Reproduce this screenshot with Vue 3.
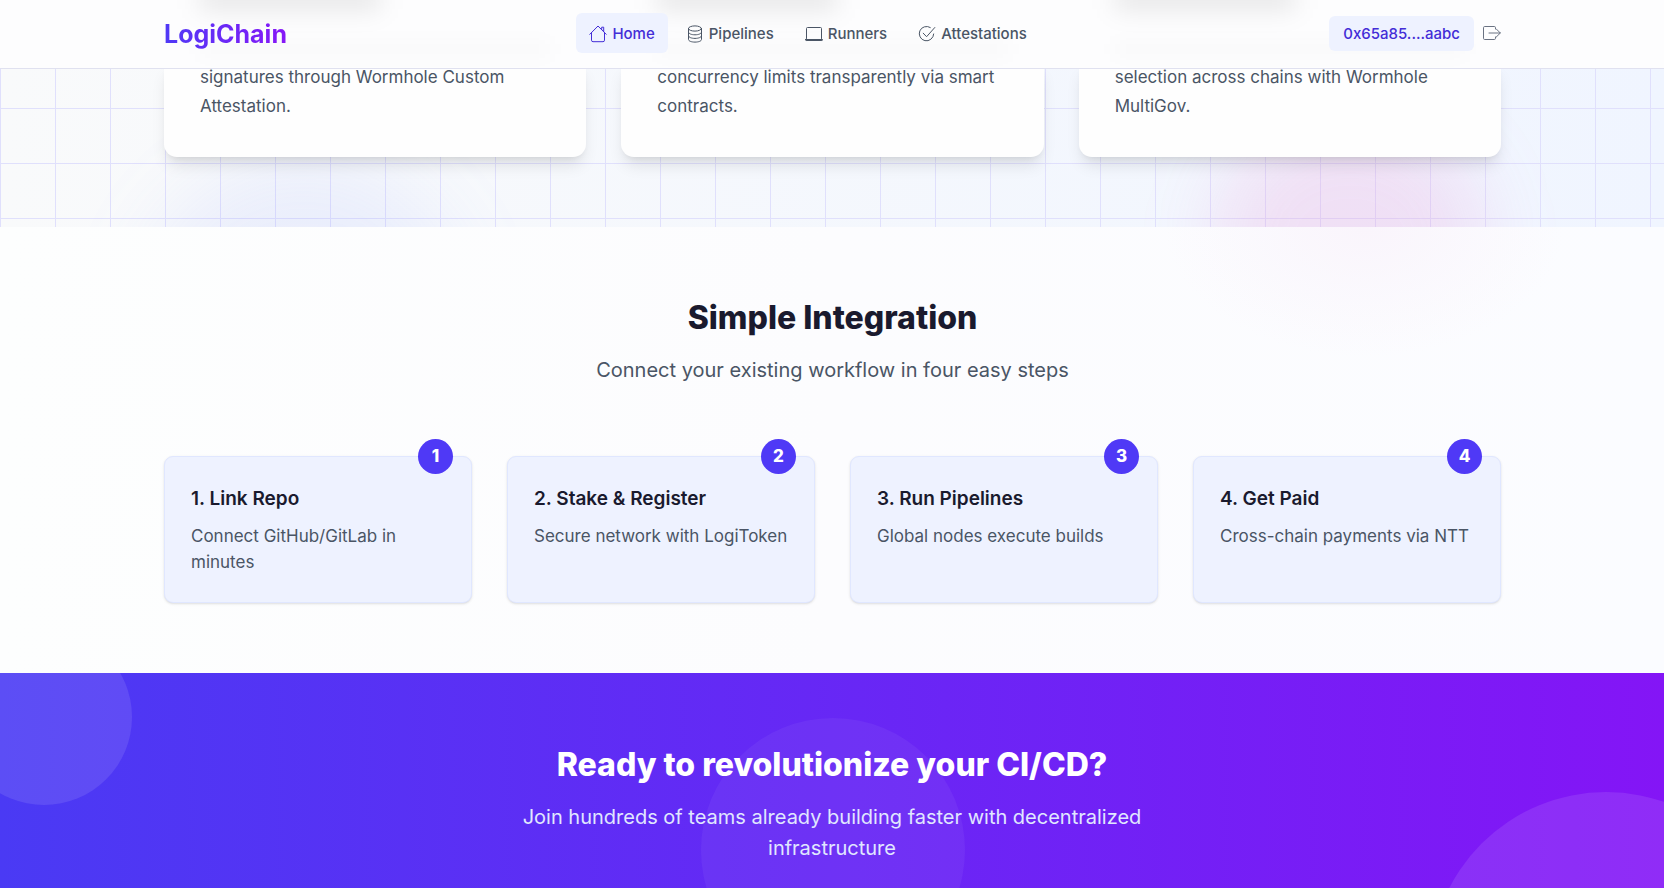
<script setup>
const nav = [
  { label: 'Home', icon: 'home', active: true },
  { label: 'Pipelines', icon: 'database' },
  { label: 'Runners', icon: 'laptop' },
  { label: 'Attestations', icon: 'check' },
]
const features = [
  'signatures through Wormhole Custom Attestation.',
  'concurrency limits transparently via smart contracts.',
  'selection across chains with Wormhole MultiGov.',
]
const steps = [
  { title: 'Link Repo', text: 'Connect GitHub/GitLab in minutes' },
  { title: 'Stake & Register', text: 'Secure network with LogiToken' },
  { title: 'Run Pipelines', text: 'Global nodes execute builds' },
  { title: 'Get Paid', text: 'Cross-chain payments via NTT' },
]
</script>

<template>
  <div class="page">
    <header class="header">
      <div class="ghosts container" aria-hidden="true">
        <div v-for="f in features" :key="f" class="ghost">
          <span class="ghost-title"></span>
          <span class="ghost-line"></span>
        </div>
      </div>
      <div class="bar container">
        <a href="#" class="logo">LogiChain</a>
        <nav class="nav" aria-label="Main">
          <a v-for="n in nav" :key="n.label" href="#" class="nav-item" :class="{ active: n.active }">
            <svg class="icon" viewBox="0 0 18 18" aria-hidden="true">
              <g v-if="n.icon === 'home'">
                <path d="M.8 9.300 9 1l8.200 8.300M2.500 7.700v7.500q0 1.500 1.500 1.500h10q1.500 0 1.500-1.500V7.700M12.700 4.600V2.200h2v4.400" />
              </g>
              <g v-else-if="n.icon === 'database'">
                <ellipse cx="9" cy="3.500" rx="6.500" ry="2.600" />
                <path d="M2.500 3.500v11c0 1.500 2.900 2.600 6.500 2.600s6.500-1.100 6.500-2.600v-11M2.500 7.200c0 1.500 2.900 2.600 6.500 2.600s6.500-1.100 6.500-2.600M2.500 10.800c0 1.500 2.900 2.600 6.500 2.600s6.500-1.100 6.500-2.600" />
              </g>
              <g v-else-if="n.icon === 'laptop'">
                <path d="M1.500 13.500V3.500q0-1 1-1h13q1 0 1 1v10" />
                <path d="M.5 14.500h17v.3q0 .7-.7.7H1.200q-.7 0-.7-.7z" fill="currentColor" />
              </g>
              <g v-else>
                <path d="M12.300 2.500A7.200 7.200 0 1 0 15.700 9M5.200 8.200l3.400 3.500L16.800 2.500" />
              </g>
            </svg>
            <span>{{ n.label }}</span>
          </a>
        </nav>
        <div class="account">
          <button type="button" class="address">0x65a85....aabc</button>
          <button type="button" class="logout" aria-label="Disconnect">
            <svg class="icon" viewBox="0 0 18 18" aria-hidden="true">
              <path d="M12.500 5V3.700Q12.500 2.500 11.300 2.500H1.700Q.5 2.500.5 3.700v10.600q0 1.200 1.200 1.200h9.600q1.200 0 1.200-1.200V13M6 9h11.300M13.300 5l4 4-4 4" />
            </svg>
          </button>
        </div>
      </div>
    </header>

    <main>
      <section class="features">
        <div class="backdrop">
          <div class="blob blob-blue"></div>
          <div class="blob blob-pink"></div>
        </div>
        <div class="feature-grid container">
          <article v-for="f in features" :key="f" class="feature">
            <p>{{ f }}</p>
          </article>
        </div>
      </section>

      <section class="steps">
        <div class="container">
          <h2>Simple Integration</h2>
          <p class="lead">Connect your existing workflow in four easy steps</p>
          <div class="step-grid">
            <article v-for="(s, i) in steps" :key="s.title" class="step">
              <span class="badge">{{ i + 1 }}</span>
              <h3>{{ i + 1 }}. {{ s.title }}</h3>
              <p>{{ s.text }}</p>
            </article>
          </div>
        </div>
      </section>

      <section class="cta">
        <div class="circle circle-a"></div>
        <div class="circle circle-b"></div>
        <div class="circle circle-c"></div>
        <div class="cta-text">
          <h2>Ready to revolutionize your CI/CD?</h2>
          <p class="lead">Join hundreds of teams already building faster with decentralized infrastructure</p>
        </div>
      </section>
    </main>
  </div>
</template>

<style>
body { margin: 0; overflow: hidden; }
</style>

<style scoped>
* { box-sizing: border-box; }
h2, h3, p { margin: 0; }
.page {
  height: 100vh;
  overflow: hidden;
  font-family: Inter, "Liberation Sans", sans-serif;
  color: #1a1a2e;
  background: #fcfcfe;
}
.container { width: 100%; max-width: 1408px; margin: 0 auto; padding: 0 35px 0 36px; }

.header {
  position: relative;
  z-index: 2;
  overflow: hidden;
  background: #fdfdfe;
  border-bottom: 1px solid #e0e1f0;
}
.bar {
  position: relative;
  display: flex;
  align-items: center;
  justify-content: space-between;
  min-height: 68px;
  padding-bottom: 2px;
}
.ghosts {
  position: absolute;
  inset: 0;
  display: grid;
  grid-template-columns: repeat(3, 1fr);
  gap: 35px;
}
.ghost { padding: 0 36px; }
.ghost span { display: block; }
.ghost-title {
  width: 180px;
  height: 24px;
  margin-top: -14px;
  background: rgba(0, 0, 0, 0.09);
  filter: blur(12px);
}
.ghost-line {
  height: 14px;
  margin-top: 32px;
  background: rgba(0, 0, 0, 0.02);
  filter: blur(9px);
}
.logo {
  padding-top: 2px;
  font-size: 25px;
  line-height: 36px;
  font-weight: 700;
  text-decoration: none;
  color: transparent;
  background: linear-gradient(90deg, #4f39f6, #8717f7);
  background-clip: text;
}
.nav { display: flex; gap: 5px; }
.nav-item {
  display: flex;
  align-items: center;
  gap: 5px;
  padding: 10px 13px 8px;
  border-radius: 6px;
  font-size: 15px;
  line-height: 22px;
  font-weight: 500;
  color: #4a5565;
  text-decoration: none;
}
.active { color: #432dd7; background: #eef2ff; }
.icon {
  display: block;
  width: 18px;
  height: 18px;
  fill: none;
  stroke: currentColor;
  stroke-width: 1;
  stroke-linecap: round;
  stroke-linejoin: round;
}
.account { display: flex; align-items: center; gap: 9px; }
.account button { border: 0; font-family: inherit; cursor: pointer; }
.address {
  padding: 6px 14px;
  border-radius: 6px;
  font-size: 15px;
  line-height: 23px;
  font-weight: 500;
  color: #432dd7;
  background: #eef2ff;
}
.account .logout { padding: 0; color: #6a7282; background: none; }

.features { position: relative; padding-bottom: 70px; }
.backdrop {
  position: absolute;
  inset: 0;
  overflow: hidden;
  background:
    linear-gradient(90deg, #e0e0fc 1px, transparent 1px) 0 0 / 55px 55px,
    linear-gradient(#e0e0fc 1px, transparent 1px) 0 45px / 55px 55px,
    linear-gradient(90deg, #f9fafb, #f0f5ff);
}
.blob { position: absolute; border-radius: 50%; filter: blur(36px); }
.blob-blue { left: 8%; top: 96px; width: 340px; height: 340px; background: rgba(130, 150, 255, 0.1); }
.blob-pink { left: 73%; top: 56px; width: 270px; height: 240px; background: rgba(230, 120, 200, 0.17); }
.feature-grid {
  position: relative;
  display: grid;
  grid-template-columns: repeat(3, 1fr);
  gap: 35px;
}
main { margin-top: -6px; }
.feature {
  padding: 0 36px 36px;
  border-radius: 0 0 13px 13px;
  background: #fefefe;
  box-shadow: 0 11px 16px -3px rgba(0, 0, 0, 0.1), 0 4px 7px -4px rgba(0, 0, 0, 0.1);
  font-size: 17px;
  line-height: 29px;
  color: #4a5565;
}

.steps {
  padding: 71px 0 70px;
  background:
    radial-gradient(ellipse 200px 130px at 82% 0, #faf5fc, transparent),
    linear-gradient(90deg, #fdfefe, #fcfcfe 50%, #fbfcff);
}
h2 { font-size: 32px; line-height: 40px; font-weight: 800; text-align: center; }
.lead { font-size: 20px; line-height: 31px; text-align: center; color: #4a5565; }
.steps .lead { margin: 17px 0 70px; }
.step-grid { display: grid; grid-template-columns: repeat(4, 1fr); gap: 35px; }
.step {
  position: relative;
  padding: 26px 26px 27px;
  border: 1px solid #e0e7ff;
  border-radius: 9px;
  background: #eef2ff;
  box-shadow: 0 1px 3px rgba(0, 0, 0, 0.1), 0 1px 2px -1px rgba(0, 0, 0, 0.1);
}
.step h3 { margin-bottom: 9px; font-size: 19px; line-height: 31px; font-weight: 600; }
.step p { font-size: 17px; line-height: 26px; color: #4a5565; }
.badge {
  position: absolute;
  top: -18px;
  right: 18px;
  width: 35px;
  height: 35px;
  border-radius: 50%;
  background: #4f39f6;
  color: #fff;
  font-size: 17px;
  line-height: 35px;
  font-weight: 800;
  text-align: center;
}

.cta {
  position: relative;
  overflow: hidden;
  min-height: 354px;
  padding: 72px 36px 70px;
  background: linear-gradient(90deg, #4a3af4, #8415f6);
}
.cta-text { position: relative; max-width: 670px; margin: 0 auto; color: #fff; }
.cta .lead { margin-top: 17px; color: #e0e7ff; }
.circle { position: absolute; border-radius: 50%; background: rgba(255, 255, 255, 0.1); }
.circle-a { top: -44px; left: -44px; width: 176px; height: 176px; }
.circle-b { right: -118px; bottom: -117px; width: 352px; height: 352px; }
.circle-c { top: 45px; left: calc(50% - 131px); width: 264px; height: 264px; background: rgba(255, 255, 255, 0.05); }
</style>
